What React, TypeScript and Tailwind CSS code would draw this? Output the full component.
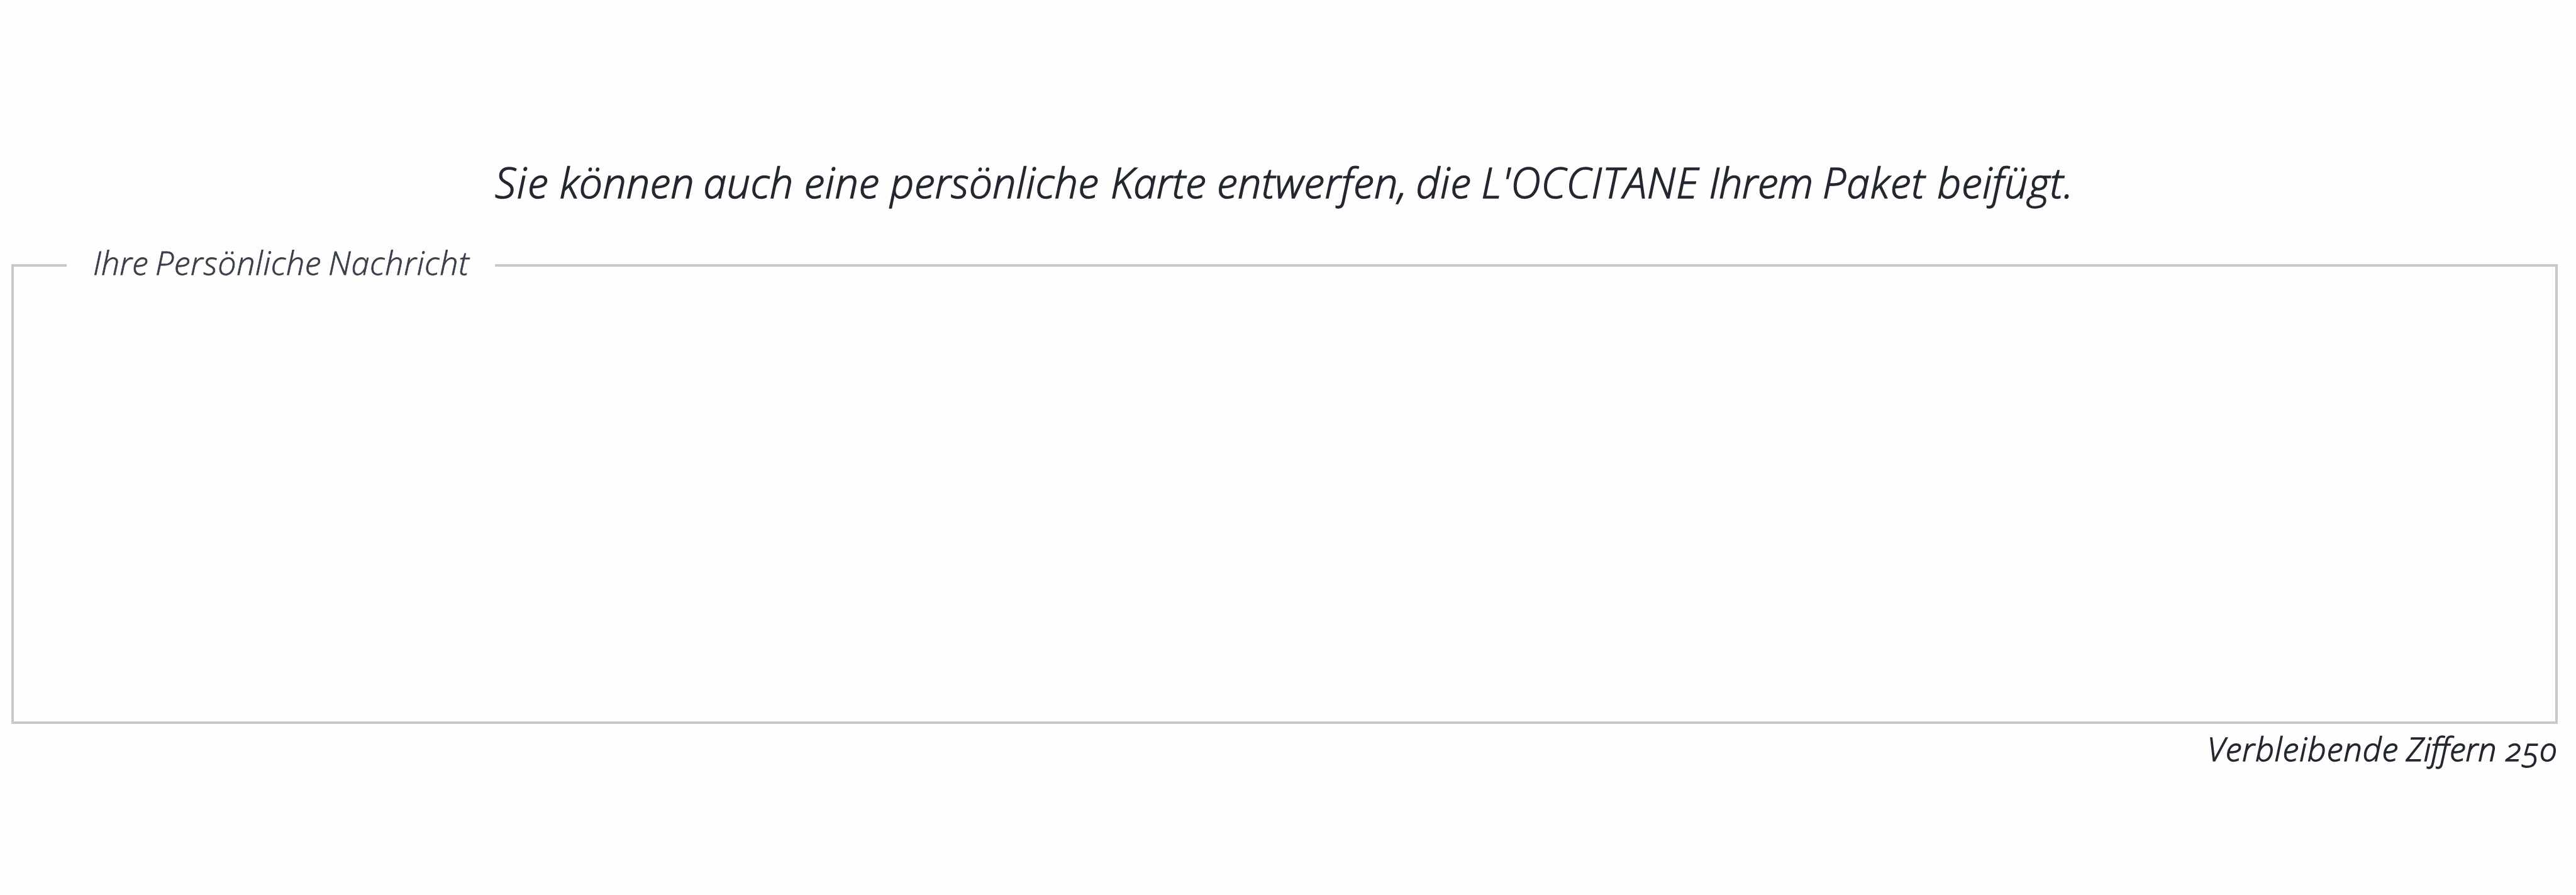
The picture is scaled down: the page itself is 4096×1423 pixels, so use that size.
type Word = { text: string; className: string };

const FONT = "font-['Open_Sans','Noto_Sans',sans-serif] italic font-light whitespace-pre";

const intro: Word[] = [
  { text: "Sie ", className: "w-[103px] tracking-[2px]" },
  { text: "können ", className: "w-[228.5px] tracking-[0.4px]" },
  { text: "auch ", className: "w-[160px] tracking-[0.6px]" },
  { text: "eine ", className: "w-[137px] tracking-[0.8px]" },
  { text: "persönliche ", className: "w-[350.5px] tracking-[0.4px]" },
  { text: "Karte ", className: "w-[169px]" },
  { text: "entwerfen, ", className: "w-[316.5px] tracking-[0.7px]" },
  { text: "die ", className: "w-[104px] tracking-[1px]" },
  { text: "L'OCCITANE ", className: "w-[362px] tracking-[1px]" },
  { text: "Ihrem ", className: "w-[180.5px] tracking-[-0.5px]" },
  { text: "Paket ", className: "w-[182.5px] tracking-[1.2px]" },
  { text: "beifügt.", className: "w-[220px] tracking-[0.7px]" },
];

const label: Word[] = [
  { text: "Ihre ", className: "w-[99px]" },
  { text: "Persönliche ", className: "w-[275px] tracking-[0.6px]" },
  { text: "Nachricht", className: "w-[230px] tracking-[0.7px]" },
];

const counter: Word[] = [
  { text: "Verbleibende ", className: "w-[316.5px] tracking-[1px]" },
  { text: "Ziffern ", className: "w-[157.5px]" },
  { text: "250", className: "w-[90px] tracking-[1px] oldstyle-nums" },
];

function Words({ words }: { words: Word[] }) {
  return (
    <>
      {words.map((w) => (
        <span key={w.text} className={`shrink-0 ${w.className}`}>{w.text}</span>
      ))}
    </>
  );
}

function MessageField() {
  return (
    <fieldset className="ml-[18px] w-[4049px] h-[759px] border-[4px] border-[#c8c8c8]">
      <legend className="ml-[84px] w-[681px] h-[60px]">
        <span className={`${FONT} flex pl-[42px] text-[52px] leading-[49px] text-[#3a3f4a] [-webkit-text-stroke:0.8px_#3a3f4a]`}>
          <Words words={label} />
        </span>
      </legend>
      <textarea
        aria-label="Ihre Persönliche Nachricht"
        maxLength={250}
        className="block w-full h-[660px] resize-none outline-none bg-transparent"
      />
    </fieldset>
  );
}

export default function App() {
  return (
    <main className="w-[4096px] h-[1423px] overflow-hidden bg-[#fefefe] flex flex-col">
      <p className={`${FONT} flex mt-[239px] h-[153px] pl-[787px] text-[66px] leading-[100px] text-[#23272f] [-webkit-text-stroke:1.5px_#23272f]`}>
        <Words words={intro} />
      </p>
      <MessageField />
      <p className={`${FONT} flex mt-[4px] pl-[3509.5px] text-[52px] leading-[70px] text-[#23272f] [-webkit-text-stroke:1.3px_#23272f]`}>
        <Words words={counter} />
      </p>
    </main>
  );
}
